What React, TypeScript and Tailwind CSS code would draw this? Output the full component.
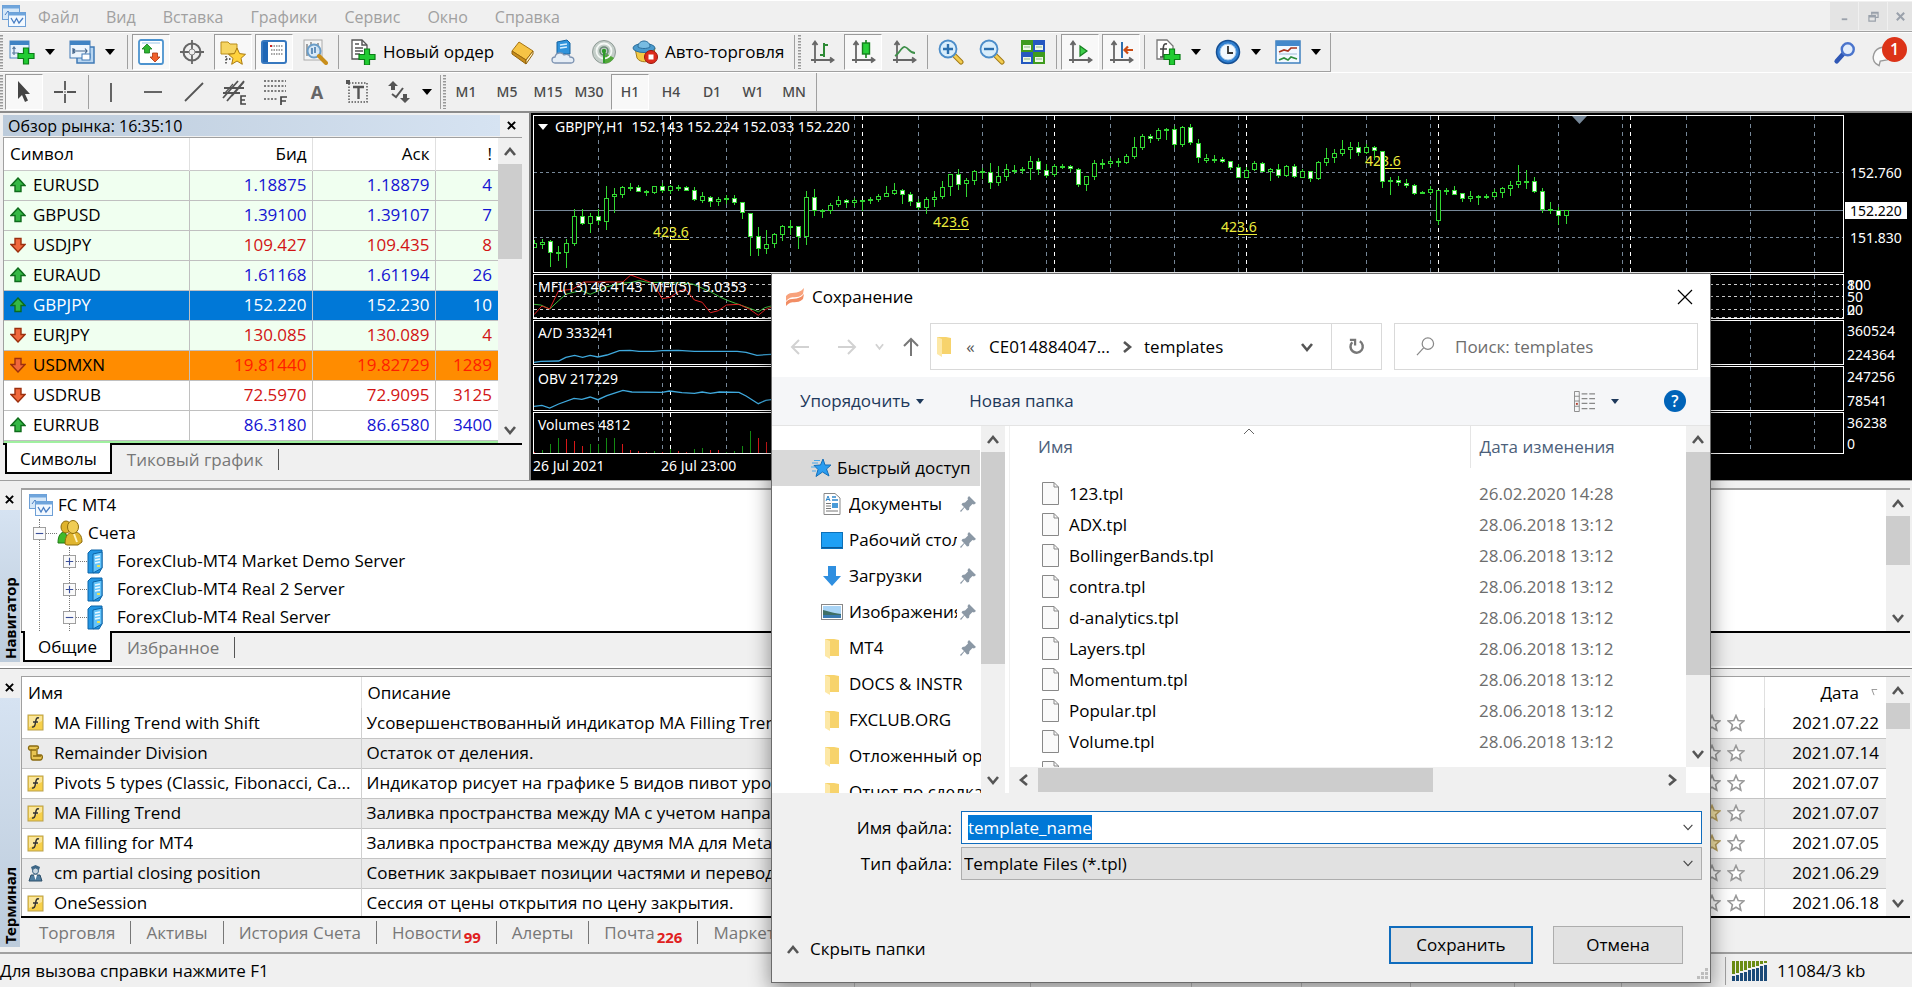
import React, { useEffect, useRef } from "react";

/* ------------------------------------------------------------------ */
/* Shared bits                                                         */
/* ------------------------------------------------------------------ */

type SvgProps = { children: React.ReactNode; size?: string; box?: string };

function Ico({ children, size = "size-[26px]", box = "0 0 26 26" }: SvgProps) {
  return (
    <svg viewBox={box} className={`${size} shrink-0`} fill="none" aria-hidden="true">
      {children}
    </svg>
  );
}

function Chevron({ dir, className = "" }: { dir: "up" | "down" | "left" | "right"; className?: string }) {
  const d = {
    up: "M2 11 L7 5 L12 11",
    down: "M2 4 L7 10 L12 4",
    left: "M10 2 L4 7 L10 12",
    right: "M4 2 L10 7 L4 12",
  }[dir];
  return (
    <svg viewBox="0 0 14 14" className={`size-[14px] ${className}`} fill="none" aria-hidden="true">
      <path d={d} stroke="#555" strokeWidth="2.6" />
    </svg>
  );
}

function Caret({ color = "#000" }: { color?: string }) {
  return (
    <svg viewBox="0 0 10 6" className="h-[6px] w-[10px] shrink-0" aria-hidden="true">
      <path d="M0 0H10L5 6Z" fill={color} />
    </svg>
  );
}

function VScroll({ thumb }: { thumb: string }) {
  return (
    <div className="flex w-[24px] shrink-0 flex-col items-center bg-[#f0f0f0]">
      <span className="flex h-[26px] items-center">
        <Chevron dir="up" />
      </span>
      <div className={`w-full bg-[#cdcdcd] ${thumb}`} />
      <span className="mt-auto flex h-[26px] items-center">
        <Chevron dir="down" />
      </span>
    </div>
  );
}

function CloseMark() {
  return (
    <svg viewBox="0 0 10 10" className="size-[9px]" aria-hidden="true">
      <path d="M1 1L9 9M9 1L1 9" stroke="#000" strokeWidth="2.2" />
    </svg>
  );
}

/* ------------------------------------------------------------------ */
/* Toolbar icons                                                       */
/* ------------------------------------------------------------------ */

const Plus = ({ x = 15, y = 15 }: { x?: number; y?: number }) => (
  <path
    transform={`translate(${x} ${y})`}
    d="M-2.500 -8H2.500V-2.500H8V2.500H2.500V8H-2.500V2.500H-8V-2.500H-2.500Z"
    fill="#22cc33"
    stroke="#0b7d17"
    strokeWidth="1.200"
  />
);

const Axes = () => (
  <path d="M6 3V24M2 21H24M3.500 6L6 2.500L8.500 6M21 18.500L24.500 21L21 23.500" stroke="#666" strokeWidth="1.800" />
);

function AppIcon() {
  return (
    <Ico>
      <rect x="1.500" y="2.500" width="17" height="14" fill="#d6e8f8" stroke="#6d9fd6" />
      <path d="M1.500 4H18.500" stroke="#6fa5dc" strokeWidth="3" />
      <path d="M4 12L7 8L9 11" stroke="#4a7fc4" />
      <rect x="7.500" y="9.500" width="17" height="14" fill="#f3f9ff" stroke="#6d9fd6" />
      <path d="M7.500 11H24.500" stroke="#6fa5dc" strokeWidth="3" />
      <path d="M10 15L13 20L15.500 15.500L18 20L22 15" stroke="#4a7fc4" strokeWidth="1.300" />
    </Ico>
  );
}

const NewChart = () => (
  <Ico>
    <rect x="1" y="2" width="19" height="17" fill="#e8f2fc" stroke="#4f86bd" />
    <rect x="1" y="2" width="19" height="4" fill="#3f83c4" />
    <path d="M5 8V16M3 14H10M3.500 10L5 8L6.500 10" stroke="#55779c" strokeWidth="1.200" />
    <Plus x={17} y={17} />
  </Ico>
);
const Windows = () => (
  <Ico>
    <rect x="8" y="8" width="17" height="16" fill="#b9d6f1" stroke="#3f79b5" strokeWidth="1.500" />
    <rect x="1" y="2" width="20" height="17" fill="#edf5fd" stroke="#3f79b5" />
    <rect x="1" y="2" width="20" height="4" fill="#3f83c4" />
    <path d="M4 9V15M4 12H18M16 9.500L18 12L16 14.500M6 10L4 12L6 14" stroke="#44668b" strokeWidth="1.200" />
    <rect x="13" y="15" width="8" height="6" fill="#fff" stroke="#3f79b5" />
  </Ico>
);
const MarketWatch = () => (
  <Ico>
    <rect x="1" y="1" width="24" height="24" rx="2" fill="#fff" stroke="#4c93cf" strokeWidth="1.800" />
    <path d="M4 4H22" stroke="#bcd8ef" strokeWidth="1.500" />
    <path d="M9 5L14 10H11.500V14H6.500V10H4Z" fill="#2fb52f" stroke="#147a1c" strokeWidth=".8" />
    <path d="M17 23L12 18H14.500V14H19.500V18H22Z" fill="#f2612c" stroke="#a93510" strokeWidth=".8" />
  </Ico>
);
const DataWindow = () => (
  <Ico>
    <circle cx="13" cy="13" r="8.500" stroke="#666" strokeWidth="2" />
    <path d="M13 1V25M1 13H25" stroke="#666" strokeWidth="1.800" />
    <circle cx="13" cy="13" r="3" fill="#f0f0f0" stroke="#888" />
  </Ico>
);
const NavigatorIcon = () => (
  <Ico>
    <path d="M1 3H8L10 5H17V15H1Z" fill="#f6d563" stroke="#b98d1b" />
    <path d="M6 17V25M6 20H12" stroke="#333" strokeWidth="1.400" strokeDasharray="1.500 1.500" />
    <path d="M17 9L19.600 14.600L25.500 15.300L21 19.300L22.300 25.300L17 22L11.700 25.300L13 19.300L8.500 15.300L14.400 14.600Z" fill="#ffd23c" stroke="#a97a10" />
  </Ico>
);
const TerminalIcon = () => (
  <Ico>
    <rect x="1" y="2" width="24" height="22" rx="2" fill="#fff" stroke="#3778bf" strokeWidth="2" />
    <rect x="2" y="3" width="5" height="20" fill="#1f67b6" />
    <path d="M10 7H22M10 11H22M10 15H22" stroke="#888" strokeWidth="1.400" strokeDasharray="1.500 1" />
    <path d="M9 7H11" stroke="#c22" strokeWidth="2" />
  </Ico>
);
const Tester = () => (
  <Ico>
    <rect x="2" y="1" width="18" height="20" fill="#f5f5f5" stroke="#aaa" />
    <path d="M5 5V17M9 3V14M16 4V12" stroke="#888" strokeWidth="1.500" />
    <circle cx="12" cy="12" r="6.500" fill="#d4e8f8" fillOpacity=".9" stroke="#6a9dc8" strokeWidth="2" />
    <path d="M10 9V15M13 8V14" stroke="#3f74a8" strokeWidth="1.500" />
    <path d="M17 17L24 24" stroke="#c98f1c" strokeWidth="4" strokeLinecap="round" />
  </Ico>
);
const NewOrder = () => (
  <Ico>
    <path d="M2 1H12L17 6V20H2Z" fill="#fff" stroke="#555" strokeWidth="1.300" />
    <path d="M12 1V6H17M5 5H9M5 9H13M5 12H13M5 15H10" stroke="#555" strokeWidth="1.500" />
    <Plus x={17} y={18} />
  </Ico>
);
const Book = () => (
  <Ico>
    <path d="M3 12L10 3L24 12L17 21Z" fill="#f6c445" stroke="#a67412" />
    <path d="M3 12L17 21V25L3 15Z" fill="#c98d1a" stroke="#94650c" />
    <path d="M17 21L24 12V15L17 25Z" fill="#fff0c2" stroke="#94650c" />
  </Ico>
);
const Cloud = () => (
  <Ico>
    <path d="M7 3L17 1L20 4V15H7Z" fill="#2f93dc" stroke="#14639f" />
    <path d="M10 6L17 5M10 9L17 8" stroke="#d6efff" strokeWidth="1.400" />
    <path d="M5 24C1 24 1 18 5 18C6 13 12 13 14 16C18 14 20 17 20 18C25 18 25 24 21 24Z" fill="#e6edf5" stroke="#7d93b1" strokeWidth="1.300" />
  </Ico>
);
const Signal = () => (
  <Ico>
    <circle cx="13" cy="13" r="11.500" fill="#c4cec9" stroke="#8f9b96" />
    <path d="M13 13L23 19A11.500 11.500 0 0 1 14 24.500Z" fill="#52a83a" />
    <circle cx="13" cy="12" r="7.500" stroke="#f4f8f5" strokeWidth="1.800" />
    <circle cx="13" cy="12" r="4" stroke="#6c8a78" strokeWidth="1.600" />
    <circle cx="13" cy="12" r="2.200" fill="#2e9a2a" />
    <path d="M13 13V24" stroke="#2e9a2a" strokeWidth="2" />
  </Ico>
);
const AutoTrade = () => (
  <Ico>
    <path d="M3 9L13 12L23 9L21 19C17 24 8 24 5 19Z" fill="#f3ca45" stroke="#a47b18" />
    <ellipse cx="12" cy="9" rx="11" ry="4.500" fill="#4b9bcd" stroke="#2b6e9b" />
    <path d="M6 8C6 0 18 0 18 8C15 10 9 10 6 8Z" fill="#78bce2" stroke="#2b6e9b" />
    <circle cx="19" cy="18" r="6.500" fill="#dd2b1c" stroke="#99150c" />
    <rect x="16.500" y="15.500" width="5" height="5" fill="#fff" />
  </Ico>
);
const BarChart = () => (
  <Ico>
    <Axes />
    <path d="M15 4V18M15 6H19M11 16H15" stroke="#2d8a35" strokeWidth="2" />
  </Ico>
);
const Candles = () => (
  <Ico>
    <Axes />
    <path d="M16 1V19" stroke="#14801d" strokeWidth="1.600" />
    <rect x="12.500" y="4" width="7" height="11" fill="#29d13a" stroke="#14801d" strokeWidth="1.400" />
  </Ico>
);
const LineChart = () => (
  <Ico>
    <Axes />
    <path d="M4 17C8 15 11 7 14 8C18 9 18 14 24 14" stroke="#3e8f49" strokeWidth="1.800" />
  </Ico>
);
const Zoom = ({ plus }: { plus?: boolean }) => (
  <Ico>
    <path d="M15 15L23 23" stroke="#a27a15" strokeWidth="5" strokeLinecap="round" />
    <path d="M15.500 15.500L23 23" stroke="#f2cc50" strokeWidth="3" strokeLinecap="round" />
    <circle cx="10" cy="10" r="8.500" fill="#d8edfb" stroke="#4c8dc9" strokeWidth="1.800" />
    <path d={plus ? "M10 5V15M5 10H15" : "M5 10H15"} stroke="#2b6fae" strokeWidth="2.400" />
  </Ico>
);
const Tile = () => (
  <Ico>
    <rect x="1" y="1" width="12" height="12" fill="#3f9b1e" />
    <rect x="13" y="1" width="12" height="12" fill="#2458c0" />
    <rect x="1" y="13" width="12" height="12" fill="#2458c0" />
    <rect x="13" y="13" width="12" height="12" fill="#3f9b1e" />
    <path d="M3 6H11V11H3ZM15 6H23V11H15ZM3 18H11V23H3ZM15 18H23V23H15Z" fill="#eef8e6" />
    <path d="M4 8H10M16 8H22M4 20H10M16 20H22" stroke="#8db98a" />
  </Ico>
);
const AutoScroll = () => (
  <Ico>
    <Axes />
    <path d="M13 7L20 12L13 17Z" fill="#3fcf4b" stroke="#15801f" strokeWidth="1.200" />
  </Ico>
);
const ChartShift = () => (
  <Ico>
    <Axes />
    <path d="M14 3V19" stroke="#2d6fae" strokeWidth="2" />
    <path d="M25 11H17M20 7.500L16.500 11L20 14.500" stroke="#cc4c14" strokeWidth="2.200" />
  </Ico>
);
const Indicators = () => (
  <Ico>
    <path d="M2 1H12L18 7V20H2Z" fill="#fff" stroke="#777" strokeWidth="1.300" />
    <path d="M12 5C8 4 8 8 8 18M5 10H12M5 18H10" stroke="#444" strokeWidth="1.600" />
    <Plus x={17} y={18} />
  </Ico>
);
const Clock = () => (
  <Ico>
    <circle cx="13" cy="13" r="11.500" fill="#2f7fd0" stroke="#154f93" strokeWidth="1.500" />
    <circle cx="13" cy="13" r="8" fill="#f2f8fe" stroke="#9cc4ea" />
    <path d="M13 7V14H18" stroke="#333" strokeWidth="1.800" />
  </Ico>
);
const Templates = () => (
  <Ico>
    <rect x="1" y="2" width="24" height="22" fill="#f3f9ff" stroke="#3f80bf" strokeWidth="1.500" />
    <rect x="1" y="2" width="24" height="5" fill="#4489cb" />
    <path d="M4 13L9 11L13 12L16 9L22 9" stroke="#a8341d" strokeWidth="1.700" />
    <path d="M4 15H22" stroke="#9fbcd8" />
    <path d="M4 21L9 19L13 21L16 18L22 20" stroke="#2c8e3b" strokeWidth="1.700" />
  </Ico>
);

const Cursor = () => (
  <Ico>
    <path d="M7 2V20L11 16L14 23L17 21.500L14 15H19Z" fill="#444" />
  </Ico>
);
const Cross = () => (
  <Ico>
    <path d="M13 2V11M13 15V24M2 13H11M15 13H24" stroke="#555" strokeWidth="1.800" />
    <path d="M12 13H14" stroke="#555" />
  </Ico>
);
const VLine = () => (
  <Ico>
    <path d="M12 4V23" stroke="#555" strokeWidth="1.800" />
  </Ico>
);
const HLine = () => (
  <Ico>
    <path d="M4 13H22" stroke="#555" strokeWidth="1.800" />
  </Ico>
);
const Diagonal = () => (
  <Ico>
    <path d="M4 22L22 4" stroke="#555" strokeWidth="1.800" />
  </Ico>
);
const Channel = () => (
  <Ico>
    <path d="M1 19L16 2M5 22L22 2M2 9L22 9M1 14L18 14" stroke="#555" strokeWidth="1.800" />
    <path d="M3 14L11 5M10 17L22 3" stroke="#555" strokeWidth="1.200" />
    <path d="M24 17H19V25H24M19 21H23" stroke="#444" strokeWidth="1.600" />
  </Ico>
);
const Fibo = () => (
  <Ico>
    <path d="M1 2H23M1 7H23M1 12H23M1 20H15" stroke="#555" strokeWidth="1.700" strokeDasharray="2 1.500" />
    <path d="M18 26V18H24M18 22H23" stroke="#444" strokeWidth="1.700" />
  </Ico>
);
const Label = () => (
  <Ico>
    <rect x="4" y="4" width="18" height="19" stroke="#555" strokeDasharray="1.500 1.500" strokeWidth="1.500" />
    <path d="M8 8H19M13.500 8V20" stroke="#555" strokeWidth="2.400" />
    <rect x="1" y="1" width="4" height="4" fill="#555" />
  </Ico>
);
const Arrows = () => (
  <Ico>
    <path d="M7 2L12 7H9V11H5V7H2Z" fill="#555" />
    <path d="M19 24L14 19H17V15H21V19H24Z" fill="#555" />
    <path d="M6 15L10 18L17 9" stroke="#555" strokeWidth="2" />
  </Ico>
);

/* ------------------------------------------------------------------ */
/* Toolbars                                                            */
/* ------------------------------------------------------------------ */

function TBtn({ label, on, children }: { label: string; on?: boolean; children: React.ReactNode }) {
  return (
    <button
      type="button"
      aria-label={label}
      aria-pressed={on}
      className={`flex h-[36px] w-[38px] shrink-0 items-center justify-center border ${
        on ? "border-b-white border-l-[#9a9a9a] border-r-white border-t-[#9a9a9a] bg-[#f8f8f8]" : "border-transparent"
      }`}
    >
      {children}
    </button>
  );
}

function DropBtn({ label, children }: { label: string; children: React.ReactNode }) {
  return (
    <button type="button" aria-label={label} className="flex h-[36px] w-[60px] shrink-0 items-center gap-[10px] pl-[6px]">
      {children}
      <Caret />
    </button>
  );
}

const Sep = ({ className = "mx-[4px]" }: { className?: string }) => (
  <div className={`h-[34px] w-px shrink-0 bg-[#a0a0a0] ${className}`} />
);
const Grip = ({ className = "" }: { className?: string }) => (
  <svg className={`h-[34px] w-[3px] shrink-0 ${className}`} aria-hidden="true">
    <path d="M1.500 0V34" stroke="#999" strokeWidth="3" strokeDasharray="1.500 1.500" />
  </svg>
);

const MENU = ["Файл", "Вид", "Вставка", "Графики", "Сервис", "Окно", "Справка"];

function MenuBar() {
  return (
    <div className="flex h-[32px] items-stretch border-b border-t border-b-[#a0a0a0] border-t-white">
      <div className="flex w-[27px] items-center pl-px">
        <AppIcon />
      </div>
      <nav className="flex items-center gap-[27px] pl-[11px] pt-px text-base text-[#a0a0a0]">
        {MENU.map((m) => (
          <button key={m} type="button">
            {m}
          </button>
        ))}
      </nav>
      <div className="ml-auto flex gap-px py-px">
        <button type="button" aria-label="Свернуть" className="flex w-[28px] items-center justify-center bg-[#e4e4e4]">
          <svg viewBox="0 0 12 12" className="size-[11px]" fill="none" stroke="#9aa1ab" strokeWidth="2">
            <path d="M3 9H9" />
          </svg>
        </button>
        <button type="button" aria-label="Восстановить" className="flex w-[28px] items-center justify-center bg-[#e4e4e4]">
          <svg viewBox="0 0 12 12" className="size-[11px]" fill="none" stroke="#9aa1ab" strokeWidth="1.300">
            <path d="M4 4V1.500H11V7H8M4 3H11M1 5H8V11H1ZM1 6.500H8" />
          </svg>
        </button>
        <button type="button" aria-label="Закрыть" className="flex w-[24px] items-center justify-center bg-[#e4e4e4]">
          <svg viewBox="0 0 12 12" className="size-[11px]" fill="none" stroke="#9aa1ab" strokeWidth="2.200">
            <path d="M2 2L10 10M10 2L2 10" />
          </svg>
        </button>
      </div>
    </div>
  );
}

function Toolbars() {
  return (
    <div className="border-b-2 border-[#8c8c8c]">
      <div className="flex h-[40px] items-stretch justify-between border-t border-white">
        <div className="flex items-center border-b border-r border-[#a0a0a0] pr-px">
          <Grip />
          <DropBtn label="Новый график"><NewChart /></DropBtn>
          <DropBtn label="Профили"><Windows /></DropBtn>
          <Sep />
          <div className="flex gap-[3px]">
            <TBtn label="Обзор рынка" on><MarketWatch /></TBtn>
            <TBtn label="Окно данных"><DataWindow /></TBtn>
            <TBtn label="Навигатор" on><NavigatorIcon /></TBtn>
            <TBtn label="Терминал" on><TerminalIcon /></TBtn>
            <TBtn label="Тестер стратегий"><Tester /></TBtn>
          </div>
          <Sep />
          <button type="button" className="flex h-[36px] w-[160px] items-center gap-[7px] pl-[7px] text-[17px]">
            <NewOrder />
            Новый ордер
          </button>
          <div className="flex gap-[3px]">
            <TBtn label="MetaEditor"><Book /></TBtn>
            <TBtn label="Хостинг"><Cloud /></TBtn>
            <TBtn label="Сигналы"><Signal /></TBtn>
          </div>
          <button type="button" className="flex h-[36px] w-[170px] items-center gap-[7px] pl-[9px] text-[17px]">
            <AutoTrade />
            Авто-торговля
          </button>
          <Sep className="mx-px" />
          <Grip className="mx-[2px]" />
          <div className="flex gap-[3px]">
            <TBtn label="Бары"><BarChart /></TBtn>
            <TBtn label="Японские свечи" on><Candles /></TBtn>
            <TBtn label="Линия"><LineChart /></TBtn>
          </div>
          <Sep />
          <div className="flex gap-[3px]">
            <TBtn label="Увеличить"><Zoom plus /></TBtn>
            <TBtn label="Уменьшить"><Zoom /></TBtn>
            <TBtn label="Расположить окна"><Tile /></TBtn>
          </div>
          <Sep />
          <div className="flex gap-[3px]">
            <TBtn label="Автопрокрутка" on><AutoScroll /></TBtn>
            <TBtn label="Сдвиг графика" on><ChartShift /></TBtn>
          </div>
          <Sep />
          <DropBtn label="Индикаторы"><Indicators /></DropBtn>
          <DropBtn label="Периоды"><Clock /></DropBtn>
          <DropBtn label="Шаблоны"><Templates /></DropBtn>
        </div>
        <div className="flex items-center gap-[14px] pr-[5px]">
          <button type="button" aria-label="Поиск">
            <Ico size="size-[24px]">
              <path d="M4 22L11 14" stroke="#2f57b5" strokeWidth="5" strokeLinecap="round" />
              <circle cx="16" cy="9" r="6.500" fill="#e3edfb" stroke="#4a74cc" strokeWidth="2.600" />
            </Ico>
          </button>
          <button type="button" aria-label="Сообщения" className="relative h-[36px] w-[36px]">
            <Ico size="size-[30px]">
              <path d="M4 22C0 18 2 9 10 8C18 8 20 16 14 19L8 20L7 24Z" fill="#fbfbfb" stroke="#999" strokeWidth="1.200" />
            </Ico>
            <span className="absolute right-0 top-[2px] flex size-[25px] items-center justify-center rounded-full bg-[#dc3318] text-base font-semibold text-white">
              1
            </span>
          </button>
        </div>
      </div>
      <div className="flex h-[39px] items-stretch border-t border-white">
        <div className="flex items-center border-r border-[#a0a0a0] pr-[3px] text-sm font-medium text-[#4a4a4a] [font-family:'Noto_Sans',sans-serif]">
          <Grip className="mr-[2px]" />
          <div className="flex gap-[3px]">
            <TBtn label="Курсор" on><Cursor /></TBtn>
            <TBtn label="Перекрестие"><Cross /></TBtn>
          </div>
          <Sep />
          <div className="flex gap-[3px]">
            <TBtn label="Вертикальная линия"><VLine /></TBtn>
            <TBtn label="Горизонтальная линия"><HLine /></TBtn>
            <TBtn label="Трендовая линия"><Diagonal /></TBtn>
            <TBtn label="Канал"><Channel /></TBtn>
            <TBtn label="Фибоначчи"><Fibo /></TBtn>
            <TBtn label="Текст"><span className="text-lg font-bold text-[#666]">A</span></TBtn>
            <TBtn label="Метка"><Label /></TBtn>
            <DropBtn label="Стрелки"><Arrows /></DropBtn>
          </div>
          <Sep className="mr-[2px]" />
          <Grip className="mr-px" />
          <div className="flex gap-[3px]">
            {["M1", "M5", "M15", "M30", "H1", "H4", "D1", "W1", "MN"].map((t) => (
              <TBtn key={t} label={t} on={t === "H1"}>
                {t}
              </TBtn>
            ))}
          </div>
        </div>
      </div>
    </div>
  );
}

/* ------------------------------------------------------------------ */
/* Market watch                                                        */
/* ------------------------------------------------------------------ */

type Quote = [string, string, string, string, "up" | "down"];
const QUOTES: Quote[] = [
  ["EURUSD", "1.18875", "1.18879", "4", "up"],
  ["GBPUSD", "1.39100", "1.39107", "7", "up"],
  ["USDJPY", "109.427", "109.435", "8", "down"],
  ["EURAUD", "1.61168", "1.61194", "26", "up"],
  ["GBPJPY", "152.220", "152.230", "10", "up"],
  ["EURJPY", "130.085", "130.089", "4", "down"],
  ["USDMXN", "19.81440", "19.82729", "1289", "down"],
  ["USDRUB", "72.5970", "72.9095", "3125", "down"],
  ["EURRUB", "86.3180", "86.6580", "3400", "up"],
];

function rowTone(name: string, dir: string) {
  if (name === "GBPJPY") return "bg-[#0078d7] text-white";
  if (name === "USDMXN") return "bg-[#ff8c00] text-[#ff1e00]";
  const tone = dir === "up" ? "text-[#1414d2]" : "text-[#d21414]";
  return `${name.endsWith("RUB") ? "bg-white" : "bg-[#f0fff0]"} ${tone}`;
}

const DirArrow = ({ dir }: { dir: string }) => (
  <svg viewBox="0 0 16 16" className="size-[16px] shrink-0" aria-hidden="true">
    {dir === "up" ? (
      <path d="M8 1L15 8.500H11V14.500H5V8.500H1Z" fill="#35b845" stroke="#0d6b1b" strokeWidth="1.400" />
    ) : (
      <path d="M8 15L15 7.500H11V1.500H5V7.500H1Z" fill="#f0683c" stroke="#9c2f0d" strokeWidth="1.400" />
    )}
  </svg>
);

function PanelTabs({ tabs }: { tabs: [string, string] }) {
  return (
    <div className="flex h-[31px] items-stretch border-t-2 border-black pl-[2px] text-[17px]">
      <button type="button" className="-mt-[2px] border-x-2 border-b-2 border-black bg-white px-[13px] pt-[2px]">
        {tabs[0]}
      </button>
      <button type="button" className="px-[15px] text-[#777]">
        {tabs[1]}
      </button>
      <div className="my-[4px] w-px bg-[#555]" />
    </div>
  );
}

function MarketWatchPanel() {
  return (
    <section className="flex w-[529px] shrink-0 flex-col pl-[3px] pr-[7px] pt-[2px]">
      <div className="flex h-[21px] items-center">
        <h2 className="flex h-full w-[497px] items-center bg-gradient-to-r from-[#bccbdb] to-[#d6e3f2] pl-[5px] text-base">
          Обзор рынка: 16:35:10
        </h2>
        <button type="button" aria-label="Закрыть панель" className="flex flex-1 justify-center">
          <CloseMark />
        </button>
      </div>
      <div className="mt-px flex h-[306px] overflow-hidden border-l border-t border-[#a0a0a0] bg-white">
        <table className="w-full flex-1 table-fixed border-collapse self-start text-[17px]">
          <colgroup>
            <col className="w-[185px]" />
            <col className="w-[123px]" />
            <col className="w-[123px]" />
            <col />
          </colgroup>
          <thead>
            <tr className="h-[32px] border-b border-[#c8c8c8]">
              <th className="border-r border-[#e0e0e0] pl-[6px] text-left font-normal">Символ</th>
              <th className="border-r border-[#e0e0e0] pr-[5px] text-right font-normal">Бид</th>
              <th className="border-r border-[#e0e0e0] pr-[5px] text-right font-normal">Аск</th>
              <th className="pr-[6px] text-right font-normal">!</th>
            </tr>
          </thead>
          <tbody>
            {QUOTES.map(([name, bid, ask, spread, dir]) => (
              <tr key={name} className={`h-[30px] border-b border-[#c0c0c0] ${rowTone(name, dir)}`}>
                <td className="border-r border-[#c0c0c0] p-0">
                  <span className={`flex items-center gap-[7px] pl-[6px] ${name === "GBPJPY" ? "text-white" : "text-black"}`}>
                    <DirArrow dir={dir} />
                    {name}
                  </span>
                </td>
                <td className="border-r border-[#c0c0c0] p-0 pr-[5px] text-right">{bid}</td>
                <td className="border-r border-[#c0c0c0] p-0 pr-[5px] text-right">{ask}</td>
                <td className="p-0 pr-[6px] text-right">{spread}</td>
              </tr>
            ))}
            <tr className="h-[30px] bg-[#a0f0a0]">
              <td colSpan={4} />
            </tr>
          </tbody>
        </table>
        <VScroll thumb="h-[95px]" />
      </div>
      <PanelTabs tabs={["Символы", "Тиковый график"]} />
    </section>
  );
}

/* ------------------------------------------------------------------ */
/* Chart                                                               */
/* ------------------------------------------------------------------ */

/* high, body top, body bottom, low (thirds of a pixel), kind */
const CANDLES =
  "390,400,415,415,h 388,395,402,418,h 390,393,430,470,w 408,427,431,452,d 388,400,428,473,h 298,318,402,408,h 298,318,342,346,w 308,318,342,368,h 298,318,334,346,w 228,265,335,360,h 235,253,262,308,h 228,232,254,265,h 220,232,234,243,d 226,231,245,246,w 240,243,248,258,d 228,229,248,252,h 218,228,242,250,w 225,229,244,252,h 226,230,234,243,d 227,231,242,244,w 232,240,269,272,w 245,259,272,280,h 257,260,275,290,w 260,267,273,288,h 254,264,269,281,d 256,264,278,284,w 276,277,310,326,w 308,310,380,437,w 352,379,418,437,w 360,403,416,432,h 370,373,403,415,h 346,349,374,392,h 330,348,350,374,d 348,349,380,416,w 244,262,380,404,h 238,262,302,317,w 298,301,305,323,d 278,286,304,312,h 258,270,286,290,h 266,270,277,293,w 264,270,277,290,h 269,271,272,303,d 262,268,271,281,d 252,258,269,276,h 228,250,260,262,h 220,241,251,255,h 238,241,254,282,w 246,253,277,288,w 267,276,293,300,w 260,267,293,312,h 242,262,269,290,h 213,230,262,268,h 192,193,230,258,h 178,193,224,240,w 205,210,223,260,h 180,184,212,224,h 175,184,187,208,d 160,187,218,236,w 168,199,218,228,h 162,178,200,212,h 165,179,182,192,d 172,178,182,192,d 138,153,178,210,h 145,153,179,194,w 162,179,198,203,w 162,169,196,200,h 162,169,171,178,d 165,169,178,186,w 174,177,225,230,w 198,198,224,242,h 150,159,201,210,h 147,159,161,177,d 143,153,160,170,h 145,154,158,170,d 132,138,158,162,h 82,111,140,147,h 72,78,114,120,h 73,79,86,100,w 54,60,88,94,h 54,58,62,90,d 48,57,104,114,w 47,51,104,110,h 42,51,98,106,w 88,99,143,158,w 133,143,149,158,h 135,148,150,158,d 142,148,155,158,w 153,153,173,180,w 162,171,203,205,w 172,180,203,204,h 153,159,180,182,h 156,159,186,187,w 174,178,184,213,h 162,178,198,204,w 165,168,198,201,h 162,168,200,204,w 178,184,203,205,h 183,184,206,216,w 153,156,206,210,h 113,144,158,168,h 117,129,144,160,h 90,118,131,138,h 96,111,118,146,h 96,111,130,137,w 102,111,129,132,h 108,111,124,150,w 123,123,215,234,w 202,209,213,255,d 198,210,220,228,w 207,219,226,234,w 222,225,251,255,w 244,247,251,252,d 228,238,248,254,h 240,241,332,344,h 233,240,242,254,d 228,240,254,256,w 249,249,266,275,w 243,259,266,276,h 255,258,260,285,d 252,259,261,267,d 237,247,261,263,h 230,234,248,264,h 213,226,236,258,h 165,213,225,234,h 180,213,215,237,d 202,213,245,250,w 234,243,300,308,w 276,297,300,312,d 292,301,318,345,w 300,301,318,342,h"
    .split(" ")
    .map((c) => {
      const p = c.split(",");
      return { v: p.slice(0, 4).map((n) => Math.round((Number(n) - 18) / 3)), kind: p[4] };
    });

const HOUR_LINES = Array.from({ length: 20 }, (_, i) => 64 + 64 * i);
const DAY_LINES = Array.from({ length: 6 }, (_, i) => 136 + 192 * i);

function Grid() {
  return (
    <g shapeRendering="crispEdges">
      {HOUR_LINES.map((x) => (
        <line key={x} x1={x + 0.5} x2={x + 0.5} y1="0" y2="200" stroke="#778899" strokeDasharray="4 4" />
      ))}
      {DAY_LINES.map((x) => (
        <line key={x} x1={x + 0.5} x2={x + 0.5} y1="0" y2="200" stroke="#fff" strokeDasharray="4 4" />
      ))}
    </g>
  );
}

const FIBS: [number, number][] = [
  [119, 121],
  [399, 111],
  [687, 116],
  [831, 50],
];

function MainPlot() {
  return (
    <svg className="block h-full w-full" aria-label="GBPJPY H1">
      <Grid />
      <g shapeRendering="crispEdges" stroke="#778899">
        <line x1="0" x2="100%" y1="56.5" y2="56.5" strokeDasharray="3 3" />
        <line x1="0" x2="100%" y1="121.5" y2="121.5" strokeDasharray="3 3" />
        <line x1="0" x2="100%" y1="94.5" y2="94.5" />
      </g>
      <path d="M1038 0H1053L1045.500 8Z" fill="#778899" />
      {FIBS.map(([x, y]) => (
        <g key={x}>
          <text x={x} y={y} fill="#ecec3c" fontSize="14">
            423.6
          </text>
          <line x1={x + 17} x2={x + 36} y1={y + 2.5} y2={y + 2.5} stroke="#ecec3c" />
        </g>
      ))}
      <g shapeRendering="crispEdges" stroke="#32d732">
        {CANDLES.map(({ v: [hi, top, bot, lo], kind }, i) => (
          <g key={i}>
            <line x1={8 * i + 0.5} x2={8 * i + 0.5} y1={hi} y2={lo} />
            {kind === "d" ? (
              <line x1={8 * i - 2} x2={8 * i + 3} y1={top + 0.5} y2={top + 0.5} strokeWidth={bot > top ? 2 : 1} />
            ) : (
              <rect
                x={8 * i - 1.5}
                y={top + 0.5}
                width="4"
                height={Math.max(2, bot - top - 1)}
                fill={kind === "w" ? "#fff" : "#000"}
              />
            )}
          </g>
        ))}
      </g>
      <path d="M4 8H14L9 14Z" fill="#fff" />
      <text x="21" y="16" fill="#fff" fontSize="14" xmlSpace="preserve">
        {"GBPJPY,H1  152.143 152.224 152.033 152.220"}
      </text>
    </svg>
  );
}

/* Indicator polylines start at the left edge of the pane. */
function toPoints(src: string, top: number) {
  return src
    .split(" ")
    .map((p) => {
      const [x, y] = p.split(",").map(Number);
      return `${((x - 26) / 2.8).toFixed(1)},${((y - top) / 3).toFixed(1)}`;
    })
    .join(" ");
}

const MFI_SLOW = toPoints(
  "26,103 45,105 70,117 95,92 115,73 140,66 160,62 183,73 205,63 230,50 270,40 300,37 320,32 350,38 385,37 407,40 430,38 470,42 520,65 545,80 565,90 590,100 630,115 655,125 672,113 690,108",
  15,
);
const MFI_FAST = toPoints(
  "26,134 48,108 70,117 95,62 115,60 135,58 165,36 275,36 297,15 330,28 360,40 385,86 407,82 430,65 450,57 475,90 497,97 520,128 542,122 565,105 600,103 630,118 654,136 675,118 690,112",
  15,
);
const AD_LINE = toPoints(
  "26,277 45,274 95,273 115,262 140,256 162,262 183,256 205,261 230,255 265,242 295,241 320,244 360,244 385,242 430,241 475,244 595,244 620,247 650,256 690,253",
  153,
);
const OBV_LINE = toPoints(
  "26,409 48,406 70,414 95,402 138,385 160,388 183,381 205,389 230,377 275,361 300,366 385,367 405,363 440,368 475,370 497,366 520,370 545,366 600,367 620,378 654,401 675,391 690,389",
  291,
);
const VOLUMES =
  "1r 3g 9g 15g 14r 12r 7r 9g 9g 15g 15g 9r 3r 2r 1r 2g 1r 4g 2r 1r 4g 5g 3r 3r 1g 2g 7g 22g 15r 11r".split(" ");

type PaneProps = { title: string; labels: [string, string][]; height: string; children: React.ReactNode };

function Pane({ title, labels, height, children }: PaneProps) {
  return (
    <div className={`mt-px flex ${height}`}>
      <div className="min-w-0 flex-1 border border-white">
        <svg className="block h-full w-full" aria-label={title}>
          <Grid />
          {children}
          <text x="4" y="17" fill="#fff" fontSize="14" xmlSpace="preserve">
            {title}
          </text>
        </svg>
      </div>
      <div className="relative w-[68px]">
        {labels.map(([text, pos]) => (
          <span key={text} className={`absolute left-[3px] leading-[16px] ${pos}`}>
            {text}
          </span>
        ))}
      </div>
    </div>
  );
}

function ChartPanel() {
  return (
    <section className="flex min-w-0 flex-1 flex-col border-l-2 border-[#808080] bg-black pl-[2px] pt-[2px] text-sm text-white [font-family:'Noto_Sans',sans-serif]">
      <div className="flex h-[158px]">
        <div className="min-w-0 flex-1 border border-white">
          <MainPlot />
        </div>
        <div className="relative w-[68px]">
          <span className="absolute left-[6px] top-[50px] leading-[16px]">152.760</span>
          <span className="absolute left-px top-[87px] w-[62px] bg-white pl-[5px] leading-[17px] text-black">152.220</span>
          <span className="absolute left-[6px] top-[115px] leading-[16px]">151.830</span>
        </div>
      </div>
      <Pane
        title="MFI(13) 46.4143  MFI(5) 15.0353"
        height="h-[45px]"
        labels={[
          ["100", "top-[3px]"],
          ["80", "top-[3px]"],
          ["50", "top-[15px]"],
          ["20", "top-[28px]"],
          ["0", "top-[28px]"],
        ]}
      >
        {[9, 21, 34, 42].map((y) => (
          <line key={y} x1="0" x2="100%" y1={y + 0.5} y2={y + 0.5} stroke="#d0d0d0" strokeDasharray="3 3" shapeRendering="crispEdges" />
        ))}
        <polyline points={MFI_SLOW} stroke="#3fbf3f" fill="none" />
        <polyline points={MFI_FAST} stroke="#e02020" fill="none" />
      </Pane>
      <Pane title="A/D 333241" height="h-[45px]" labels={[["360524", "top-[3px]"], ["224364", "top-[27px]"]]}>
        <polyline points={AD_LINE} stroke="#3fa9dd" strokeWidth="1.300" fill="none" />
      </Pane>
      <Pane title="OBV 217229" height="h-[45px]" labels={[["247256", "top-[3px]"], ["78541", "top-[27px]"]]}>
        <polyline points={OBV_LINE} stroke="#3fa9dd" strokeWidth="1.300" fill="none" />
      </Pane>
      <Pane title="Volumes 4812" height="h-[42px]" labels={[["36238", "top-[3px]"], ["0", "top-[24px]"]]}>
        <g shapeRendering="crispEdges">
          {VOLUMES.map((v, i) => (
            <line
              key={i}
              x1={8 * i + 0.5}
              x2={8 * i + 0.5}
              y1={40 - parseInt(v, 10)}
              y2="40"
              stroke={v.endsWith("g") ? "#138a13" : "#d81818"}
            />
          ))}
        </g>
      </Pane>
      <div className="flex h-[26px] leading-[24px]">
        <span className="w-[128px]">26 Jul 2021</span>
        <span>26 Jul 23:00</span>
      </div>
    </section>
  );
}

/* ------------------------------------------------------------------ */
/* Navigator                                                           */
/* ------------------------------------------------------------------ */

function SideStrip({ title }: { title: string }) {
  return (
    <div className="flex w-[20px] shrink-0 flex-col items-center">
      <button type="button" aria-label="Закрыть панель" className="flex h-[22px] items-center pr-[2px]">
        <CloseMark />
      </button>
      <h2 className="flex w-full flex-1 rotate-180 items-center bg-gradient-to-t from-[#d6e3f2] to-[#bccbdb] pt-[3px] text-[15px] leading-[20px] font-bold [font-family:'Noto_Sans',sans-serif] [writing-mode:vertical-rl]">
        {title}
      </h2>
    </div>
  );
}

const Expander = ({ open }: { open?: boolean }) => (
  <svg viewBox="0 0 14 14" className="size-[13px] shrink-0" aria-hidden="true">
    <rect x=".5" y=".5" width="13" height="13" fill="#fafafa" stroke="#999" />
    <path d={open ? "M3 7H11" : "M3 7H11M7 3V11"} stroke="#3a4f9a" strokeWidth="1.200" />
  </svg>
);

const Users = () => (
  <Ico>
    <path d="M1 23C1 15 4 12 8 12L13 23Z" fill="#3fb92c" stroke="#1c7a12" />
    <ellipse cx="9" cy="7" rx="5" ry="6" fill="#dfb32c" stroke="#8e6c0b" />
    <path d="M8 24C8 15 12 12 17 12S25 15 25 22L21 25H10Z" fill="#e0b52f" stroke="#8e6c0b" />
    <ellipse cx="16" cy="7" rx="5.500" ry="6.500" fill="#f0cd55" stroke="#8e6c0b" />
    <path d="M17 14L20 22" stroke="#fff3bd" strokeWidth="2" />
  </Ico>
);
const Server = () => (
  <Ico size="h-[25px] w-[18px]" box="0 0 18 25">
    <path d="M1 4L4 1H15V19L12 24H1Z" fill="#2396e4" stroke="#0d65a8" />
    <path d="M6 5L15 3V19L6 24Z" fill="#63c4fb" stroke="#0d65a8" />
    <path d="M8 8L13 7M8 11L13 10M8 14L13 13" stroke="#e9f8ff" strokeWidth="1.500" />
    <rect x="10" y="16" width="3" height="2" fill="#e9e35a" />
  </Ico>
);

const SERVERS: [string, boolean][] = [
  ["ForexClub-MT4 Market Demo Server", false],
  ["ForexClub-MT4 Real 2 Server", false],
  ["ForexClub-MT4 Real Server", true],
];

const Dots = () => <span className="w-[11px] border-t border-dotted border-[#777]" />;

function NavigatorPanel() {
  return (
    <section className="flex pr-[2px] pt-[7px]">
      <SideStrip title="Навигатор" />
      <div className="ml-px min-w-0 flex-1">
        <div className="flex h-[143px] overflow-hidden border-l border-t-2 border-[#a0a0a0] bg-white">
          <ul className="min-w-0 flex-1 pt-px text-[17px]">
            <li className="flex h-[28px] items-center gap-[4px] pl-[6px]">
              <AppIcon />
              FC MT4
            </li>
            <li className="ml-[17px] border-l border-dotted border-[#777]">
              <div className="-ml-[7px] flex h-[28px] items-center">
                <Expander open />
                <Dots />
                <Users />
                <span className="pl-[5px]">Счета</span>
              </div>
              <ul className="ml-[29px] border-l border-dotted border-[#777]">
                {SERVERS.map(([name, open]) => (
                  <li key={name} className="-ml-[7px] flex h-[28px] items-center">
                    <Expander open={open} />
                    <Dots />
                    <Server />
                    <span className="pl-[12px]">{name}</span>
                  </li>
                ))}
              </ul>
            </li>
          </ul>
          <VScroll thumb="h-[49px]" />
        </div>
        <PanelTabs tabs={["Общие", "Избранное"]} />
      </div>
    </section>
  );
}

/* ------------------------------------------------------------------ */
/* Terminal                                                            */
/* ------------------------------------------------------------------ */

const IndicatorGlyph = () => (
  <Ico size="size-[17px]" box="0 0 17 17">
    <rect x="1" y="1" width="15" height="15" fill="#f7d04a" stroke="#b9a04a" />
    <path d="M2 2H15V7L2 13Z" fill="#fbe69a" />
    <path d="M12 4C9 3 9 6 8.500 8.500C8 12 7 13.500 5 13M6 8H11" stroke="#333" strokeWidth="1.500" />
  </Ico>
);
const ScriptGlyph = () => (
  <Ico size="size-[17px]" box="0 0 17 17">
    <path d="M3 1H10C12 1 12 4 10 4V10H14C16 10 16 15 13 15H6C4 15 4 13 4 12V5H3C1 5 1 1 3 1Z" fill="#e9c552" stroke="#8a6b12" strokeWidth="1.300" />
    <path d="M4 5H9M6 11H14" stroke="#8a6b12" strokeWidth="1.300" />
  </Ico>
);
const ExpertGlyph = () => (
  <Ico size="size-[17px]" box="0 0 17 17">
    <path d="M4 2L8.500 0L13 2L12 5H5Z" fill="#3c6585" />
    <circle cx="8.500" cy="6" r="3" fill="#c9d6df" stroke="#3c6585" />
    <path d="M2 16L4 10H13L15 16Z" fill="#4f7d9f" stroke="#2c4e68" />
    <path d="M7 10L8.500 15L10 10Z" fill="#fff" />
  </Ico>
);

type Product = [string, string, string, "f" | "s" | "e"];
const PRODUCTS: Product[] = [
  ["MA Filling Trend with Shift", "Усовершенствованный индикатор MA Filling Trend с возможностью сдвига", "2021.07.22", "f"],
  ["Remainder Division", "Остаток от деления.", "2021.07.14", "s"],
  ["Pivots 5 types (Classic, Fibonacci, Ca...", "Индикатор рисует на графике 5 видов пивот уровней", "2021.07.07", "f"],
  ["MA Filling Trend", "Заливка пространства между MA с учетом направления", "2021.07.07", "f"],
  ["MA filling for MT4", "Заливка пространства между двумя MA для MetaTrader 4", "2021.07.05", "f"],
  ["cm partial closing position", "Советник закрывает позиции частями и переводит", "2021.06.29", "e"],
  ["OneSession", "Сессия от цены открытия по цену закрытия.", "2021.06.18", "f"],
];

const Star = ({ gold }: { gold?: boolean }) => (
  <svg viewBox="0 0 18 18" className="size-[18px]" fill="none" aria-hidden="true">
    <path
      d="M9 1.500L11.200 6.500L16.700 7L12.600 10.700L13.800 16.200L9 13.300L4.200 16.200L5.400 10.700L1.300 7L6.800 6.500Z"
      fill={gold ? "#f8e6a8" : "#fff"}
      stroke={gold ? "#b8a060" : "#999"}
      strokeWidth="1.600"
    />
  </svg>
);

const TERMINAL_TABS: [string, string?][] = [
  ["Торговля"],
  ["Активы"],
  ["История Счета"],
  ["Новости", "99"],
  ["Алерты"],
  ["Почта", "226"],
  ["Маркет"],
];

function TerminalPanel() {
  return (
    <section className="flex flex-1 border-t border-[#808080] pb-[5px] pr-[2px] pt-[7px]">
      <SideStrip title="Терминал" />
      <div className="ml-px min-w-0 flex-1">
        <div className="flex h-[240px] overflow-hidden border-l border-t border-[#a0a0a0] bg-white">
          <table className="w-full min-w-0 flex-1 table-fixed border-collapse self-start text-[17px]">
            <colgroup>
              <col className="w-[339px]" />
              <col />
              <col className="w-[170px]" />
              <col className="w-[122px]" />
            </colgroup>
            <thead>
              <tr className="h-[31px]">
                <th className="border-r border-[#e0e0e0] pl-[6px] text-left font-normal">Имя</th>
                <th className="pl-[6px] text-left font-normal">Описание</th>
                <th className="border-r border-[#e0e0e0] text-left font-normal" />
                <th className="p-0 font-normal">
                  <span className="flex items-center justify-end gap-[12px] pr-[8px]">
                    Дата
                    <svg viewBox="0 0 8 8" className="size-[7px]" fill="none" aria-hidden="true">
                      <path d="M7 .5H1L3.500 7" stroke="#888" />
                    </svg>
                  </span>
                </th>
              </tr>
            </thead>
            <tbody>
              {PRODUCTS.map(([name, text, date, kind], i) => (
                <tr key={name} className={`h-[30px] border-b border-[#c4c4c4] ${i % 2 ? "bg-[#ebebeb]" : "bg-white"}`}>
                  <td className="border-r border-[#d0d0d0] p-0">
                    <div className="flex items-center gap-[10px] pl-[5px]">
                      {kind === "f" && <IndicatorGlyph />}
                      {kind === "s" && <ScriptGlyph />}
                      {kind === "e" && <ExpertGlyph />}
                      <span className="truncate">{name}</span>
                    </div>
                  </td>
                  <td className="truncate p-0 pl-[5px]">{text}</td>
                  <td className="border-r border-[#d0d0d0] p-0">
                    <div className="flex justify-end gap-[6px] pr-[19px]">
                      {[0, 1, 2, 3, 4].map((n) => (
                        <Star key={n} gold={n < 4 && (i === 3 || i === 4)} />
                      ))}
                    </div>
                  </td>
                  <td className="p-0 pr-[7px] text-right">{date}</td>
                </tr>
              ))}
            </tbody>
          </table>
          <VScroll thumb="h-[26px]" />
        </div>
        <div className="flex h-[31px] items-stretch overflow-hidden border-t-2 border-black pl-[3px] text-[17px] text-[#777]">
          {TERMINAL_TABS.map(([name, count]) => (
            <div key={name} className="flex items-stretch">
              <button type="button" className="px-[15px]">
                {name}
                {count && <sub className="pl-[2px] text-[15px] font-bold text-[#e02020]">{count}</sub>}
              </button>
              <div className="my-[3px] w-px bg-[#777]" />
            </div>
          ))}
        </div>
      </div>
    </section>
  );
}

const STATUS_CELLS = [
  "w-[255px]",
  "w-[176px]",
  "w-[161px]",
  "w-[110px]",
  "w-[109px]",
  "w-[104px]",
  "w-[107px]",
];

function StatusBar() {
  return (
    <footer className="flex h-[35px] items-center border-t-2 border-[#a0a0a0] text-[17px]">
      <span className="w-[600px] whitespace-nowrap">Для вызова справки нажмите F1</span>
      <div className="flex flex-1 self-stretch">
        {STATUS_CELLS.map((w, i) => (
          <span key={i} className={`shrink-0 border-r border-[#c4c4c4] ${w}`} />
        ))}
      </div>
      <div className="flex h-[28px] w-[187px] items-center gap-[8px] border-l border-[#a0a0a0] pl-[5px]">
        <svg viewBox="0 0 38 20" className="h-[20px] w-[38px]" shapeRendering="crispEdges" aria-hidden="true">
          {Array.from({ length: 9 }, (_, i) => (
            <g key={i}>
              <rect x={i * 4 + 1} y="0" width="3" height={13 - i * 1.4} fill="#6a8c14" />
              <rect x={i * 4 + 1} y={15 - i * 1.4} width="3" height={5 + i * 1.4} fill="#1b4a78" />
            </g>
          ))}
        </svg>
        11084/3 kb
      </div>
    </footer>
  );
}

/* ------------------------------------------------------------------ */
/* Save dialog                                                         */
/* ------------------------------------------------------------------ */

const Folder = () => (
  <Ico size="h-[21px] w-[15px]" box="0 0 15 21">
    <path d="M0 1H9L14 2V18H0Z" fill="#f7d36c" />
    <path d="M0 1L5 3V21L0 18Z" fill="#fde8a6" />
  </Ico>
);
const DocIcon = () => (
  <Ico size="h-[22px] w-[18px]" box="0 0 18 22">
    <path d="M1 .5H12L17 5V21.500H1Z" fill="#fff" stroke="#888" />
    <path d="M9 4H13M9 7H15" stroke="#3187c9" strokeWidth="1.300" />
    <path d="M3 8L5 3L7 8M3.500 6.500H6.500" stroke="#3187c9" />
    <rect x="9" y="10" width="6" height="5" fill="#4a9bd8" />
    <path d="M3 10.500H8M3 13H8M3 15.500H8M3 18H15" stroke="#777" />
  </Ico>
);
const DesktopIcon = () => (
  <Ico size="h-[17px] w-[22px]" box="0 0 22 17">
    <rect x=".5" y=".5" width="21" height="16" fill="#1ea0f5" stroke="#0c70b8" />
    <path d="M1 15.500H21" stroke="#0a5a99" />
  </Ico>
);
const DownloadIcon = () => (
  <Ico size="h-[20px] w-[20px]" box="0 0 20 20">
    <path d="M6 0H14V10H19L10 20L1 10H6Z" fill="#2f8fe0" />
  </Ico>
);
const PictureIcon = () => (
  <Ico size="h-[16px] w-[22px]" box="0 0 22 16">
    <rect x=".5" y=".5" width="21" height="15" fill="#fff" stroke="#888" />
    <rect x="2" y="2" width="18" height="12" fill="#a9d4f5" />
    <path d="M2 6C8 7 10 9 20 10V12H2Z" fill="#3f6f65" />
    <rect x="2" y="11" width="18" height="3" fill="#3a7ab0" />
  </Ico>
);
const QuickStar = () => (
  <Ico size="size-[20px]" box="0 0 20 20">
    <path d="M12 1L14 7H20L15.500 11L18 18L11.500 14L5 18.500L7 11.500L3 7.500L9.500 7Z" fill="#2b9df0" stroke="#146fb8" />
    <path d="M1 5H7M0 9H4M1 13H5M3 2.500H9" stroke="#4aa8ea" strokeWidth="1.200" />
  </Ico>
);
const Pin = () => (
  <Ico size="size-[16px]" box="0 0 16 16">
    <path d="M9 0L16 7L14 8.500L12.500 8L9.500 11L9 14L7 14.500L4.500 11.500L1 16L0 15L4 11L1.500 8.500L2.500 7L5 6.500L8 3.500L7.500 2Z" fill="#8b98a5" />
  </Ico>
);
const FileIcon = () => (
  <Ico size="h-[23px] w-[17px]" box="0 0 17 23">
    <path d="M.5 .5H12L16.500 5V22.500H.5Z" fill="#fafafa" stroke="#888" />
    <path d="M12 .5V5H16.500" stroke="#888" />
  </Ico>
);

const PLACES: [string, () => React.JSX.Element, boolean][] = [
  ["Документы", DocIcon, true],
  ["Рабочий стол", DesktopIcon, true],
  ["Загрузки", DownloadIcon, true],
  ["Изображения", PictureIcon, true],
  ["MT4", Folder, true],
  ["DOCS & INSTR", Folder, false],
  ["FXCLUB.ORG", Folder, false],
  ["Отложенный ордер", Folder, false],
  ["Отчет по сделкам", Folder, false],
];

const FILES: [string, string][] = [
  ["123.tpl", "26.02.2020 14:28"],
  ["ADX.tpl", "28.06.2018 13:12"],
  ["BollingerBands.tpl", "28.06.2018 13:12"],
  ["contra.tpl", "28.06.2018 13:12"],
  ["d-analytics.tpl", "28.06.2018 13:12"],
  ["Layers.tpl", "28.06.2018 13:12"],
  ["Momentum.tpl", "28.06.2018 13:12"],
  ["Popular.tpl", "28.06.2018 13:12"],
  ["Volume.tpl", "28.06.2018 13:12"],
  ["woodie's ccc.tpl", "28.06.2018 13:12"],
];

function NavArrow({ label, d, faint }: { label: string; d: string; faint?: boolean }) {
  return (
    <button type="button" aria-label={label}>
      <svg viewBox="0 0 20 20" className="size-[20px]" fill="none">
        <path d={d} stroke={faint ? "#d2d2d2" : "#777"} strokeWidth="2" />
      </svg>
    </button>
  );
}

function SaveDialog() {
  const nameRef = useRef<HTMLInputElement>(null);
  useEffect(() => {
    nameRef.current?.focus();
    nameRef.current?.select();
  }, []);

  return (
    <div
      role="dialog"
      aria-label="Сохранение"
      className="absolute left-[771px] top-[273px] flex w-[940px] flex-col border border-[#6b6b6b] bg-white text-[17px] shadow-[0_6px_20px_rgba(0,0,0,0.45)]"
    >
      <div className="flex h-[46px] items-center pl-[13px] pr-[17px]">
        <Ico size="size-[20px]" box="0 0 20 20">
          <path d="M1 9C6 3 12 9 19 1L18 7C12 13 7 7 1 14Z" fill="#f8a27c" />
          <path d="M1 15C6 9 12 15 19 7L18 12C12 18 7 12 1 19Z" fill="#f28d64" />
        </Ico>
        <h2 className="pl-[7px]">Сохранение</h2>
        <button type="button" aria-label="Закрыть" className="ml-auto">
          <svg viewBox="0 0 16 16" className="size-[16px]" fill="none">
            <path d="M1 1L15 15M15 1L1 15" stroke="#000" strokeWidth="1.200" />
          </svg>
        </button>
      </div>

      <div className="flex h-[57px] items-start pl-[18px] pr-[12px] pt-[3px]">
        <div className="flex h-[47px] w-[140px] items-center">
          <NavArrow label="Назад" faint d="M19 10H2M9 3L2 10L9 17" />
          <span className="w-[27px]" />
          <NavArrow label="Вперед" faint d="M1 10H18M11 3L18 10L11 17" />
          <span className="w-[18px]" />
          <svg viewBox="0 0 10 8" className="h-[8px] w-[9px]" fill="none" aria-hidden="true">
            <path d="M1 1L5 6L9 1" stroke="#d2d2d2" strokeWidth="2" />
          </svg>
          <span className="w-[17px]" />
          <NavArrow label="Вверх" d="M10 19V2M3 9L10 2L17 9" />
        </div>
        <div className="flex h-[47px] min-w-0 flex-1 items-center border border-[#d9d9d9]">
          <span className="pl-[6px]">
            <Folder />
          </span>
          <span className="w-[37px] text-center text-[#555]">«</span>
          <button type="button">CE014884047...</button>
          <span className="flex w-[34px] justify-center">
            <Chevron dir="right" className="size-[12px]" />
          </span>
          <button type="button">templates</button>
          <button type="button" aria-label="Предыдущие расположения" className="ml-auto mr-[17px]">
            <Chevron dir="down" />
          </button>
          <button type="button" aria-label="Обновить" className="flex h-full w-[50px] items-center justify-center border-l border-[#d9d9d9]">
            <svg viewBox="0 0 18 18" className="size-[17px]" fill="none">
              <path d="M12.500 3.500A6.500 6.500 0 1 1 4.500 4.500" stroke="#777" strokeWidth="2.600" />
              <path d="M2 2H7.500V8" stroke="#777" strokeWidth="2.400" />
            </svg>
          </button>
        </div>
        <label className="ml-[12px] flex h-[47px] w-[304px] items-center border border-[#d9d9d9] pl-[21px]">
          <svg viewBox="0 0 20 20" className="size-[19px] shrink-0" fill="none" aria-hidden="true">
            <circle cx="12.500" cy="7" r="6" stroke="#888" strokeWidth="1.300" />
            <path d="M8 11.500L1 19" stroke="#888" strokeWidth="1.300" />
          </svg>
          <input
            type="search"
            aria-label="Поиск: templates"
            placeholder="Поиск: templates"
            className="ml-[20px] w-full min-w-0 bg-transparent outline-none placeholder:text-[#6d6d6d]"
          />
        </label>
      </div>

      <div className="flex h-[49px] items-center border-b border-[#e4e4e4] bg-[#f5f6f8] pl-[28px] pr-[24px] text-[#1e395b]">
        <button type="button" className="flex items-center gap-[6px]">
          Упорядочить
          <svg viewBox="0 0 8 5" className="h-[5px] w-[8px]" aria-hidden="true">
            <path d="M0 0H8L4 5Z" fill="#1e395b" />
          </svg>
        </button>
        <button type="button" className="ml-[45px]">
          Новая папка
        </button>
        <button type="button" aria-label="Вид" className="ml-auto flex items-center gap-[16px]">
          <svg viewBox="0 0 22 22" className="size-[21px]" fill="none" stroke="#888">
            <path d="M.5 .5H5.500V21.500H.5ZM.5 5.500H5.500M.5 10.500H5.500M.5 16H5.500" />
            <path d="M8 3H14M16 3H22M8 8H14M16 8H22M8 13H14M16 13H22M8 18.500H14M16 18.500H22" strokeWidth="1.400" />
            <path d="M2 13.500H4" stroke="#b04030" strokeWidth="2" />
          </svg>
          <svg viewBox="0 0 8 5" className="h-[5px] w-[8px]" aria-hidden="true">
            <path d="M0 0H8L4 5Z" fill="#1e395b" />
          </svg>
        </button>
        <button
          type="button"
          aria-label="Справка"
          className="ml-[45px] flex size-[22px] items-center justify-center rounded-full bg-[#0063b8] text-base font-semibold text-white"
        >
          ?
        </button>
      </div>

      <div className="flex h-[367px]">
        <div className="h-full w-[209px] overflow-hidden pt-[24px]">
          <div className="mr-px flex h-[36px] items-center gap-[6px] bg-[#d9d9d9] pl-[39px] whitespace-nowrap">
            <QuickStar />
            Быстрый доступ
          </div>
          <ul>
            {PLACES.map(([name, Glyph, pinned]) => (
              <li key={name} className="flex h-[36px] items-center">
                <span className="flex w-[77px] shrink-0 justify-center pl-[43px]">
                  <Glyph />
                </span>
                <span className="min-w-0 flex-1 overflow-hidden whitespace-nowrap">{name}</span>
                {pinned && (
                  <span className="shrink-0 pl-[3px] pr-[5px]">
                    <Pin />
                  </span>
                )}
              </li>
            ))}
          </ul>
        </div>
        <VScroll thumb="h-[212px]" />
        <div className="ml-[4px] flex min-w-0 flex-1 flex-col border-l border-[#f0f0f0]">
          <div className="flex h-[341px]">
            <div className="relative min-w-0 flex-1 overflow-hidden">
              <svg viewBox="0 0 12 7" className="absolute left-[233px] top-[2px] h-[7px] w-[12px]" fill="none" aria-hidden="true">
                <path d="M1 6L6 1L11 6" stroke="#666" />
              </svg>
              <table className="w-full table-fixed border-collapse">
                <colgroup>
                  <col />
                  <col className="w-[216px]" />
                </colgroup>
                <thead>
                  <tr className="h-[42px] text-[#4c607a]">
                    <th className="pl-[28px] text-left font-normal">Имя</th>
                    <th className="border-l border-[#e5e5e5] pl-[9px] text-left font-normal">Дата изменения</th>
                  </tr>
                </thead>
                <tbody className="before:block before:h-[10px]">
                  {FILES.map(([name, date]) => (
                    <tr key={name} className="h-[31px]">
                      <td className="p-0">
                        <span className="flex items-center gap-[10px] pl-[32px]">
                          <FileIcon />
                          {name}
                        </span>
                      </td>
                      <td className="p-0 pl-[9px] text-[#6d6d6d]">{date}</td>
                    </tr>
                  ))}
                </tbody>
              </table>
            </div>
            <VScroll thumb="h-[223px]" />
          </div>
          <div className="flex h-[26px]">
            <div className="flex flex-1 items-center bg-[#f0f0f0]">
              <span className="flex w-[28px] justify-center">
                <Chevron dir="left" />
              </span>
              <div className="h-[24px] w-[395px] bg-[#cdcdcd]" />
              <span className="ml-auto flex w-[28px] justify-center">
                <Chevron dir="right" />
              </span>
            </div>
            <div className="w-[24px]" />
          </div>
        </div>
      </div>

      <div className="flex flex-col bg-[#f0f0f0]">
        <div className="grid grid-cols-[1fr_741px] items-center gap-x-[9px] gap-y-[3px] pr-[8px] pt-[18px] text-right">
          <label htmlFor="file-name">Имя файла:</label>
          <div className="flex h-[33px] items-center border border-[#0f6cbd] bg-white pl-[6px] pr-[7px]">
            <input
              id="file-name"
              ref={nameRef}
              defaultValue="template_name"
              className="min-w-0 flex-1 bg-transparent outline-none selection:bg-[#0078d7] selection:text-white"
            />
            <svg viewBox="0 0 12 8" className="h-[7px] w-[12px]" fill="none" aria-hidden="true">
              <path d="M1 1L6 6.500L11 1" stroke="#444" strokeWidth="1.300" />
            </svg>
          </div>
          <label htmlFor="file-type">Тип файла:</label>
          <div className="relative flex h-[33px] items-center border border-[#adadad] bg-[#e1e1e1]">
            <select id="file-type" className="h-full w-full appearance-none bg-transparent pl-[2px] outline-none">
              <option>Template Files (*.tpl)</option>
            </select>
            <svg viewBox="0 0 12 8" className="pointer-events-none absolute right-[7px] h-[7px] w-[12px]" fill="none" aria-hidden="true">
              <path d="M1 1L6 6.500L11 1" stroke="#444" strokeWidth="1.300" />
            </svg>
          </div>
        </div>
        <div className="flex items-center pb-[18px] pl-[14px] pr-[27px] pt-[46px]">
          <button type="button" className="flex items-center gap-[10px] pt-[8px]">
            <Chevron dir="up" />
            Скрыть папки
          </button>
          <button type="button" className="ml-auto h-[38px] w-[144px] border-2 border-[#0f6cbd] bg-[#e1e1e1]">
            Сохранить
          </button>
          <button type="button" className="ml-[20px] h-[38px] w-[130px] border border-[#adadad] bg-[#e1e1e1]">
            Отмена
          </button>
        </div>
      </div>
      <svg viewBox="0 0 12 12" className="absolute bottom-[2px] right-[2px] size-[12px]" fill="#bdbdbd" aria-hidden="true">
        <path d="M9 0H12V3H9ZM9 4H12V7H9ZM5 4H8V7H5ZM9 8H12V11H9ZM5 8H8V11H5ZM1 8H4V11H1Z" />
      </svg>
    </div>
  );
}

/* ------------------------------------------------------------------ */

export default function App() {
  return (
    <div className="relative flex min-h-screen w-full flex-col overflow-hidden bg-[#f0f0f0] text-black [font-family:'Open_Sans','Noto_Sans',sans-serif]">
      <MenuBar />
      <Toolbars />
      <main className="flex flex-1 flex-col">
        <div className="flex">
          <MarketWatchPanel />
          <ChartPanel />
        </div>
        <div className="border-b-2 border-t border-b-white border-t-[#a0a0a0] pb-[4px]">
          <NavigatorPanel />
        </div>
        <TerminalPanel />
      </main>
      <StatusBar />
      <SaveDialog />
    </div>
  );
}
